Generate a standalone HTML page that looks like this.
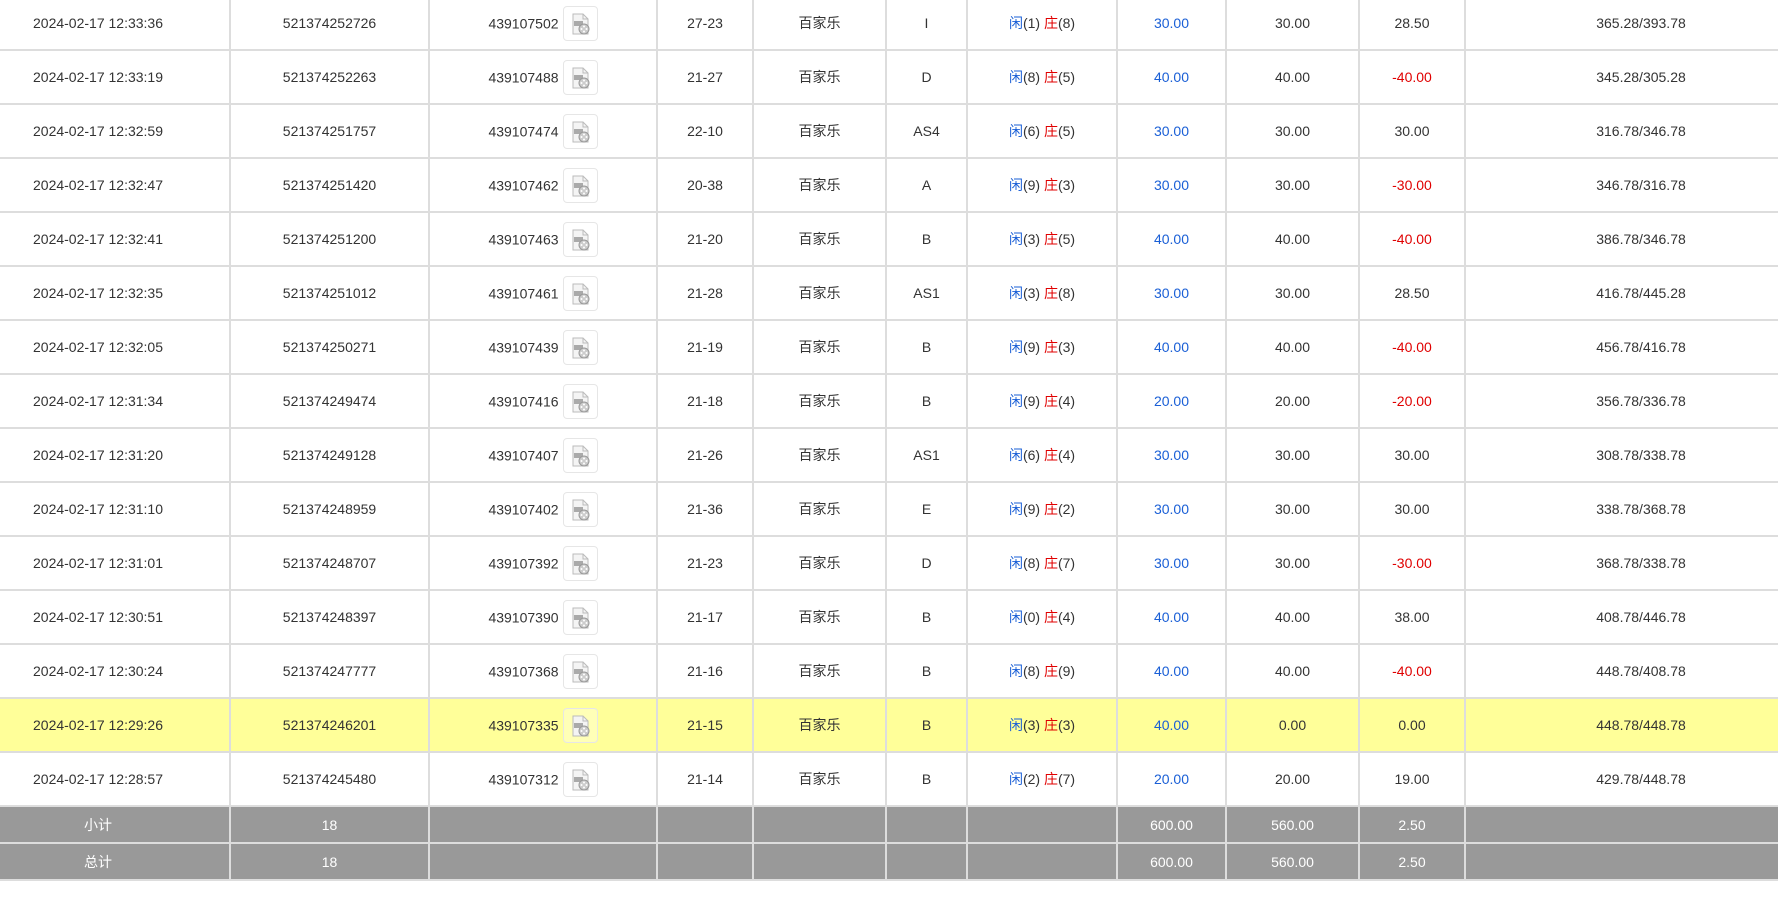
<!DOCTYPE html>
<html><head><meta charset="utf-8"><style>
body{margin:0;width:1778px;height:908px;overflow:hidden;background:#fff;font-family:"Liberation Sans","Noto Sans CJK SC",sans-serif;}
table{position:absolute;top:-5px;left:-2px;width:1796px;border-collapse:collapse;table-layout:fixed;font-size:14px;color:#333;}
td{border:2px solid #ddd;text-align:center;height:52px;padding:0;white-space:nowrap;}
td.f{padding-right:33px;}
td.l{padding-left:22px;}
tr.y td{background:#ffff99;}
tr.s td{background:#999;color:#fff;height:35px;border-color:#ddd;}
.b{color:#1a5fd6}.r{color:#e00000}
.n{vertical-align:middle}
.ic{display:inline-block;width:33px;height:33px;border:1px solid #e6e6e6;border-radius:4px;vertical-align:middle;margin-left:4px;position:relative;background:rgba(255,255,255,.3)}
.ic svg{position:absolute;left:5px;top:5px}
</style></head><body>
<table>
<colgroup><col style="width:231px"><col style="width:199px"><col style="width:228px"><col style="width:96px"><col style="width:133px"><col style="width:81px"><col style="width:150px"><col style="width:109px"><col style="width:133px"><col style="width:106px"><col style="width:330px"></colgroup>
<tbody id="b"></tbody>
</table>
<script>
var I='<span class="ic"><svg width="24" height="24" viewBox="0 0 24 24"><path d="M4 2h10l5 5v15H4z" fill="#f4f4f4" stroke="#bbb"/><path d="M14 2v5h5" fill="none" stroke="#bbb"/><rect x="5" y="9" width="9" height="5" fill="#aaa"/><circle cx="15" cy="17" r="5" fill="#ccc" stroke="#999"/><circle cx="15" cy="14.5" r="1" fill="#fff"/><circle cx="12.5" cy="17" r="1" fill="#fff"/><circle cx="17.5" cy="17" r="1" fill="#fff"/><circle cx="15" cy="19.5" r="1" fill="#fff"/></svg></span>';
var d=[["2024-02-17 12:33:36","521374252726","439107502","27-23","I",1,8,"30.00","30.00","28.50","365.28/393.78"],
["2024-02-17 12:33:19","521374252263","439107488","21-27","D",8,5,"40.00","40.00","-40.00","345.28/305.28"],
["2024-02-17 12:32:59","521374251757","439107474","22-10","AS4",6,5,"30.00","30.00","30.00","316.78/346.78"],
["2024-02-17 12:32:47","521374251420","439107462","20-38","A",9,3,"30.00","30.00","-30.00","346.78/316.78"],
["2024-02-17 12:32:41","521374251200","439107463","21-20","B",3,5,"40.00","40.00","-40.00","386.78/346.78"],
["2024-02-17 12:32:35","521374251012","439107461","21-28","AS1",3,8,"30.00","30.00","28.50","416.78/445.28"],
["2024-02-17 12:32:05","521374250271","439107439","21-19","B",9,3,"40.00","40.00","-40.00","456.78/416.78"],
["2024-02-17 12:31:34","521374249474","439107416","21-18","B",9,4,"20.00","20.00","-20.00","356.78/336.78"],
["2024-02-17 12:31:20","521374249128","439107407","21-26","AS1",6,4,"30.00","30.00","30.00","308.78/338.78"],
["2024-02-17 12:31:10","521374248959","439107402","21-36","E",9,2,"30.00","30.00","30.00","338.78/368.78"],
["2024-02-17 12:31:01","521374248707","439107392","21-23","D",8,7,"30.00","30.00","-30.00","368.78/338.78"],
["2024-02-17 12:30:51","521374248397","439107390","21-17","B",0,4,"40.00","40.00","38.00","408.78/446.78"],
["2024-02-17 12:30:24","521374247777","439107368","21-16","B",8,9,"40.00","40.00","-40.00","448.78/408.78"],
["2024-02-17 12:29:26","521374246201","439107335","21-15","B",3,3,"40.00","0.00","0.00","448.78/448.78"],
["2024-02-17 12:28:57","521374245480","439107312","21-14","B",2,7,"20.00","20.00","19.00","429.78/448.78"]];
var h='';d.forEach(function(r,i){h+='<tr'+(i==13?' class="y"':'')+'><td class="f">'+r[0]+'</td><td>'+r[1]+'</td><td><span class="n">'+r[2]+'</span>'+I+'</td><td>'+r[3]+'</td><td>百家乐</td><td>'+r[4]+'</td><td><span class="b">闲</span>('+r[5]+') <span class="r">庄</span>('+r[6]+')</td><td class="b">'+r[7]+'</td><td>'+r[8]+'</td><td'+(r[9][0]=='-'?' class="r"':'')+'>'+r[9]+'</td><td class="l">'+r[10]+'</td></tr>';});
['小计','总计'].forEach(function(t){h+='<tr class="s"><td class="f">'+t+'</td><td>18</td><td></td><td></td><td></td><td></td><td></td><td>600.00</td><td>560.00</td><td>2.50</td><td></td></tr>';});
document.getElementById('b').innerHTML=h;
</script>
</body></html>
